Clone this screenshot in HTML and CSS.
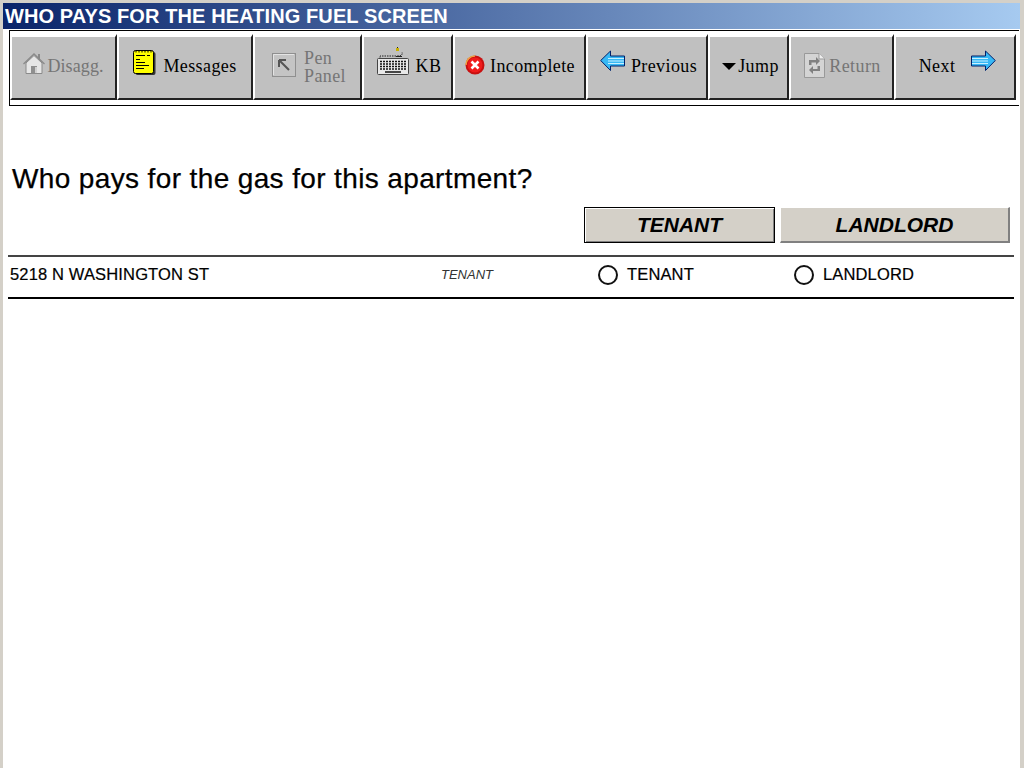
FILE: index.html
```html
<!DOCTYPE html>
<html lang="en">
<head>
    <meta charset="UTF-8">
    <title>Who Pays For The Heating Fuel Screen</title>
    <link rel="stylesheet" href="styles.css">
</head>
<body>

<div class="window">
    <div class="title-bar">WHO PAYS FOR THE HEATING FUEL SCREEN</div>

    <div class="toolbar">
        <div class="tool tool-disagg disabled">
            <svg class="icon-house" width="22" height="21" viewBox="0 0 22 21">
                <path d="M15 1h2v6h-2z" fill="#8a8a8a"/>
                <path d="M3 10 L11 2.500 L19 10 V20.500 H3z" fill="#e6e6e6" stroke="#8a8a8a"/>
                <path d="M0.500 11 L11 1 L21.500 11" fill="none" stroke="#8a8a8a" stroke-width="1.300"/>
                <path d="M8 13h6v7.500H8z" fill="#8f8f8f"/>
                <path d="M12 14h2v6h-2z" fill="#d0d0d0"/>
            </svg>
            <span>Disagg.</span>
        </div>
        <div class="tool tool-messages">
            <svg class="icon-note" width="23" height="25" viewBox="0 0 23 25">
                <rect x="2.500" y="2" width="20" height="23" rx="2" fill="#333"/>
                <rect x="0.500" y="0.500" width="20" height="23" rx="2" fill="#ffff00" stroke="#000"/>
                <path d="M3 0.500v2M6 0.500v2M9 0.500v2M12 0.500v2M15 0.500v2M18 0.500v2" stroke="#000"/>
                <path d="M3 5.500h9M14 5.500h3M3 9.500h4M3 12.500h9M3 15.500h13M3 18.500h8" stroke="#000"/>
            </svg>
            <span>Messages</span>
        </div>
        <div class="tool tool-pen disabled">
            <svg class="icon-pen" width="24" height="24" viewBox="0 0 24 24">
                <rect x="0.500" y="0.500" width="23" height="23" fill="#c4c4c4" stroke="#8f8f8f"/>
                <path d="M1.500 22V1.500h20.500" fill="none" stroke="#e4e4e4"/>
                <path d="M7 7h7M7 7v7M7 7l10 10" fill="none" stroke="#555" stroke-width="2"/>
            </svg>
            <span>Pen<br>Panel</span>
        </div>
        <div class="tool tool-kb">
            <svg class="icon-kb" width="32" height="28" viewBox="0 0 32 28">
                <path d="M3 12V9h16c4 0 7 0 6-4" fill="none" stroke="#222" stroke-dasharray="1.500 1"/>
                <path d="M19 9.500h6" stroke="#222"/>
                <rect x="19" y="1" width="3" height="3" fill="#c8b000"/>
                <path d="M20 0h1v1h-1z" fill="#222"/>
                <rect x="0.500" y="11.500" width="31" height="16" rx="1" fill="#e8e8e8" stroke="#444"/>
                <path d="M3 14.500h26M3 17h26M3 19.500h26M3 22h26" stroke="#111" stroke-width="1.500" stroke-dasharray="2 1"/>
                <path d="M8 25h16" stroke="#111" stroke-width="1.500"/>
            </svg>
            <span>KB</span>
        </div>
        <div class="tool tool-incomplete">
            <svg class="icon-stop" width="20" height="20" viewBox="0 0 20 20">
                <circle cx="10" cy="10" r="9.500" fill="#c81010"/>
                <circle cx="10" cy="10" r="7.500" fill="#f01c1c"/>
                <path d="M1 10a9 9 0 0 1 9-9" fill="none" stroke="#f0a040" stroke-width="1.500"/>
                <path d="M6.500 6.500l7 7M13.500 6.500l-7 7" stroke="#fff" stroke-width="2.600"/>
            </svg>
            <span>Incomplete</span>
        </div>
        <div class="tool tool-previous">
            <svg class="lift" width="25" height="22" viewBox="0 0 25 22">
                <path d="M0.700 10.500 L10.500 1 V6 H24.500 V16 H10.500 V20.500z" fill="#37b8f5" stroke="#00206a"/>
                <path d="M8 8.500h16M8 11h16M8 13.500h16" stroke="#c8f0ff"/>
            </svg>
            <span>Previous</span>
        </div>
        <div class="tool tool-jump">
            <svg width="14" height="7" viewBox="0 0 14 7"><path d="M0 0h14L7 7z" fill="#000"/></svg>
            <span>Jump</span>
        </div>
        <div class="tool tool-return disabled">
            <svg class="icon-return" width="21" height="25" viewBox="0 0 21 25">
                <path d="M0.500 0.500H15L20.500 6V24.500H0.500z" fill="#d4d4d4" stroke="#999"/>
                <path d="M15 0.500V6H20.500" fill="#f0f0f0" stroke="#999"/>
                <path d="M5 12V7h7V4l4 4-4 4V9.500H7.500V12zM16 13v5H9v3l-4-4 4-4v3h4.500v-3z" fill="#808080"/>
            </svg>
            <span>Return</span>
        </div>
        <div class="tool tool-next">
            <span>Next</span>
            <svg class="lift" width="25" height="22" viewBox="0 0 25 22">
                <path d="M24.300 10.500 L14.500 1 V6 H0.500 V16 H14.500 V20.500z" fill="#37b8f5" stroke="#00206a"/>
                <path d="M1 8.500h16M1 11h16M1 13.500h16" stroke="#c8f0ff"/>
            </svg>
        </div>
    </div>

    <div class="content">
        <h1 class="question">Who pays for the gas for this apartment?</h1>

        <div class="answers">
            <div class="answer-btn answer-tenant">TENANT</div>
            <div class="answer-btn answer-landlord">LANDLORD</div>
        </div>

        <div class="unit-row">
            <div class="address">5218 N WASHINGTON ST</div>
            <div class="previous-value">TENANT</div>
            <label class="radio radio-tenant"><span class="radio-dot"></span>TENANT</label>
            <label class="radio"><span class="radio-dot"></span>LANDLORD</label>
        </div>
    </div>
</div>

</body>
</html>
```

FILE: styles.css
```css
html,
body {
    margin: 0;
    height: 100%;
    overflow: hidden;
}

body {
    background-color: #d4d0c8;
    font-family: 'Liberation Sans', Arial, sans-serif;
}

.window {
    display: flex;
    flex-direction: column;
    box-sizing: border-box;
    height: 768px;
    margin: 3px 4px 0 3px;
    background-color: #fff;
}

.title-bar {
    height: 26px;
    line-height: 27px;
    padding-left: 2px;
    background: linear-gradient(to right, #0a246a, #a6caf0);
    color: #fff;
    font-size: 20px;
    font-weight: bold;
    letter-spacing: 0.1px;
    white-space: nowrap;
}

.toolbar {
    display: flex;
    box-sizing: border-box;
    height: 76px;
    margin: 1px 1px 0 6px;
    padding: 3px 3px 0 0;
    border-top: 1px solid #000;
    border-left: 1px solid #000;
    border-bottom: 1px solid #000;
}

.tool {
    display: flex;
    align-items: center;
    justify-content: center;
    box-sizing: border-box;
    height: 66px;
    padding-bottom: 2px;
    background-color: #c0c0c0;
    border-top: 3px solid #fff;
    border-left: 2px solid #fff;
    border-right: 2px solid #222;
    border-bottom: 2px solid #222;
    font-family: 'Liberation Serif', 'Times New Roman', serif;
    font-size: 18px;
    letter-spacing: 0.4px;
    color: #000;
}

.disabled {
    color: #757575;
}

.tool-disagg { width: 107px; gap: 2px; letter-spacing: 0.1px; }
.tool-messages { width: 136px; gap: 7px; }
.tool-pen { width: 109px; gap: 8px; padding-left: 3px; line-height: 18px; }
.tool-kb { width: 91px; gap: 7px; padding-left: 3px; }
.tool-incomplete { width: 133px; gap: 5px; padding-left: 1px; }
.tool-previous { width: 122px; gap: 6px; padding-left: 3px; }
.tool-jump { width: 81px; gap: 2px; padding-left: 4px; }
.tool-return { width: 105px; gap: 4px; padding-left: 2px; }
.tool-next { width: 122px; gap: 16px; padding-left: 5px; }

.lift { margin-top: -12px; }
.icon-house { margin-top: -6px; }
.icon-note { margin-top: -8px; }
.icon-pen { margin-top: -4px; }
.icon-kb { margin-top: -12px; }
.icon-stop { margin-top: -4px; }
.icon-return { margin-top: -2px; }

.content {
    padding: 0 6px 0 5px;
}

.question {
    margin: 57px 0 0 4px;
    font-size: 28px;
    font-weight: normal;
    line-height: 32px;
    letter-spacing: 0.37px;
    -webkit-text-stroke: 0.25px #000;
    color: #000;
}

.answers {
    display: flex;
    margin: 12px 0 12px 576px;
    gap: 5px;
}

.answer-btn {
    box-sizing: border-box;
    height: 36px;
    line-height: 33px;
    text-align: center;
    background-color: #d4d0c8;
    font-size: 21px;
    font-weight: bold;
    font-style: italic;
    color: #000;
    border-top: 1px solid #fff;
    border-left: 1px solid #fff;
    border-right: 2px solid #808080;
    border-bottom: 2px solid #808080;
}

.answer-tenant {
    width: 191px;
    border: 1px solid #000;
    box-shadow: inset 1px 1px 0 #fff, inset -1px -1px 0 #808080;
}

.answer-landlord {
    width: 230px;
}

.unit-row {
    display: flex;
    align-items: center;
    box-sizing: border-box;
    height: 44px;
    padding-bottom: 6px;
    border-top: 2px solid #444;
    border-bottom: 2px solid #000;
    font-size: 16.500px;
    letter-spacing: 0.15px;
    -webkit-text-stroke: 0.2px #000;
    color: #000;
}

.address {
    width: 433px;
    padding-left: 2px;
    box-sizing: border-box;
}

.previous-value {
    width: 157px;
    font-size: 13px;
    font-style: italic;
    letter-spacing: 0;
    -webkit-text-stroke: 0;
    color: #333;
}

.radio {
    display: flex;
    align-items: center;
    gap: 9px;
}

.radio-tenant {
    width: 196px;
}

.radio-dot {
    box-sizing: border-box;
    width: 20px;
    height: 20px;
    margin-top: 2px;
    border: 2px solid #111;
    border-radius: 50%;
}
```
